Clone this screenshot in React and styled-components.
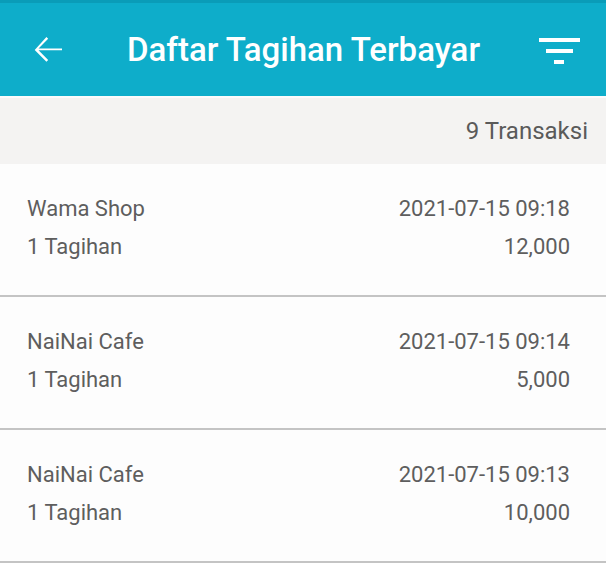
import React from "react";
import styled, { createGlobalStyle } from "styled-components";

const transactions = [
  { id: 1, merchant: "Wama Shop", date: "2021-07-15 09:18", count: "1 Tagihan", amount: "12,000" },
  { id: 2, merchant: "NaiNai Cafe", date: "2021-07-15 09:14", count: "1 Tagihan", amount: "5,000" },
  { id: 3, merchant: "NaiNai Cafe", date: "2021-07-15 09:13", count: "1 Tagihan", amount: "10,000" },
];

const App = () => {
  return (
    <Screen>
      <GlobalStyle />
      <Toolbar>
        <IconButton aria-label="Kembali">
          <svg width="42" height="42" viewBox="0 0 24 24" fill="#fff">
            <path d="M20 11.1H6.6l5.5-5.5-1-1L4.4 12l6.7 6.7 1-1-5.5-5.5H20z" />
          </svg>
        </IconButton>
        <Title>Daftar Tagihan Terbayar</Title>
        <IconButton aria-label="Filter">
          <svg width="44" height="30" viewBox="0 0 44 30" fill="#fff">
            <rect x="1" y="3" width="41" height="4" />
            <rect x="8" y="14" width="27" height="4" />
            <rect x="16" y="25" width="10" height="4" />
          </svg>
        </IconButton>
      </Toolbar>
      <Summary>9 Transaksi</Summary>
      <List>
        {transactions.map((t) => (
          <Row key={t.id}>
            <Line>
              <span>{t.merchant}</span>
              <span>{t.date}</span>
            </Line>
            <Line>
              <span>{t.count}</span>
              <span>{t.amount}</span>
            </Line>
          </Row>
        ))}
      </List>
    </Screen>
  );
};

const GlobalStyle = createGlobalStyle`
  body {
    margin: 0;
    background: #fdfdfd;
    font-family: Roboto, "Noto Sans", sans-serif;
  }
`;

const Screen = styled.div`
  width: 606px;
  height: 563px;
  overflow: hidden;
  background: #fdfdfd;
`;

const Toolbar = styled.header`
  height: 96px;
  background: #0eadca;
  border-top: 3px solid #0a9cb8;
  box-sizing: border-box;
  display: flex;
  align-items: center;
  padding: 0 24px 0 27px;
`;

const IconButton = styled.div`
  display: flex;
  align-items: center;
  justify-content: center;
`;

const Title = styled.h1`
  flex: 1;
  margin: 0 0 0 58px;
  color: #ffffff;
  font-size: 33px;
  font-weight: 500;
  letter-spacing: 0;
`;

const Summary = styled.div`
  height: 68px;
  background: #f4f3f2;
  border-top: 2px solid #fbfbfb;
  box-sizing: border-box;
  display: flex;
  align-items: center;
  justify-content: flex-end;
  padding: 0 18px;
  color: #5a5a5a;
  font-size: 24px;
`;

const List = styled.div`
  display: flex;
  flex-direction: column;
`;

const Row = styled.div`
  height: 133px;
  box-sizing: border-box;
  padding: 31px 36px 0 27px;
  border-bottom: 2px solid #c4c4c4;
  display: flex;
  flex-direction: column;
  gap: 10px;
`;

const Line = styled.div`
  display: flex;
  justify-content: space-between;
  color: #5e5e5e;
  font-size: 22px;
  line-height: 28px;
`;

export default App;
